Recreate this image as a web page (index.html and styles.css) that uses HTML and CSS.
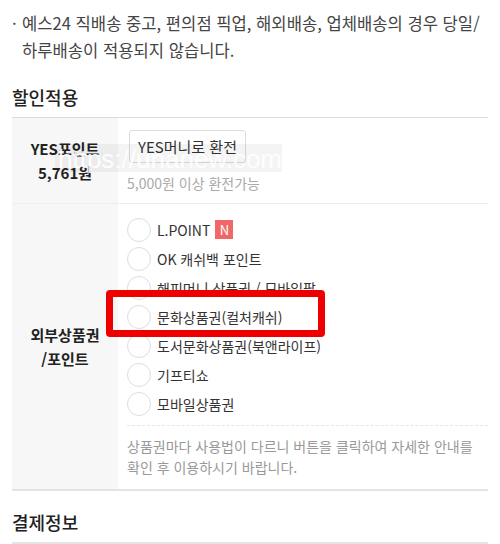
FILE: index.html
```html
<!DOCTYPE html>
<html lang="ko">
<head>
    <meta charset="UTF-8">
    <meta name="viewport" content="width=device-width, initial-scale=1.0">
    <title>할인적용</title>
    <link rel="stylesheet" href="styles.css">
</head>
<body>
    <div class="page">
        <p class="notice"><span class="dot">·</span>예스24 직배송 중고, 편의점 픽업, 해외배송, 업체배송의 경우 당일/<br>하루배송이 적용되지 않습니다.</p>

        <h2 class="section-title">할인적용</h2>
        <div class="table">
            <div class="row">
                <div class="label">YES포인트<br>5,761원</div>
                <div class="cell cell-point">
                    <button class="btn">YES머니로 환전</button>
                    <p class="hint">5,000원 이상 환전가능</p>
                </div>
            </div>
            <div class="row last">
                <div class="label">외부상품권<br>/포인트</div>
                <div class="cell">
                    <ul class="radio-list">
                        <li><span class="radio"></span>L.POINT <span class="badge">N</span></li>
                        <li><span class="radio"></span>OK 캐쉬백 포인트</li>
                        <li><span class="radio"></span>해피머니 상품권 / 모바일팝</li>
                        <li><span class="radio"></span>문화상품권(컬처캐쉬)</li>
                        <li><span class="radio"></span>도서문화상품권(북앤라이프)</li>
                        <li><span class="radio"></span>기프티쇼</li>
                        <li><span class="radio"></span>모바일상품권</li>
                    </ul>
                    <p class="note">상품권마다 사용법이 다르니 버튼을 클릭하여 자세한 안내를<br>확인 후 이용하시기 바랍니다.</p>
                </div>
            </div>
        </div>

        <h2 class="section-title pay">결제정보</h2>
        <div class="rule"></div>
    </div>

    <!-- 캡처 위에 얹힌 표시들 -->
    <div class="highlight"></div>
    <div class="watermark">https://unanew.com</div>
</body>
</html>
```

FILE: styles.css
```css
body {
    margin: 0;
    background: #fff;
    font-family: "Noto Sans CJK KR", "Noto Sans", sans-serif;
    color: #333;
    overflow: hidden;
}

.page {
    padding: 10px 12px 0;
}

.notice {
    margin: 0;
    padding-left: 10px;
    position: relative;
    font-size: 16.6px;
    line-height: 27px;
    color: #444;
}

.notice .dot {
    position: absolute;
    left: 0;
    top: 0;
}

.section-title {
    margin: 0;
    padding: 20px 0 7px;
    font-size: 18px;
    font-weight: 500;
    line-height: 26px;
    color: #222;
}

.section-title.pay {
    padding: 18px 0 7px;
}

.table {
    border-top: 1px solid #dcdcdc;
    border-bottom: 2px solid #e4e4e4;
}

.row {
    display: flex;
    border-bottom: 1px solid #eee;
}

.row.last {
    border-bottom: none;
}

.label {
    width: 106px;
    flex-shrink: 0;
    background: #f7f7f7;
    display: flex;
    align-items: center;
    justify-content: center;
    text-align: center;
    font-size: 15px;
    font-weight: 700;
    line-height: 24px;
    color: #222;
}

.cell {
    flex: 1;
    padding-left: 9px;
}

.cell-point {
    padding-top: 12px;
    padding-bottom: 10px;
}

.btn {
    display: block;
    font-family: inherit;
    font-size: 15px;
    color: #333;
    background: #fff;
    border: 1px solid #ddd;
    border-radius: 3px;
    height: 33px;
    padding: 0 8px;
    margin: 0 0 0 2px;
}

.hint {
    margin: 10px 0 0;
    font-size: 14px;
    line-height: 20px;
    color: #aaa;
}

.radio-list {
    list-style: none;
    margin: 0;
    padding: 11px 0 7px;
    border-bottom: 1px dashed #e6e6e6;
}

.radio-list li {
    display: flex;
    align-items: center;
    height: 29px;
    font-size: 14px;
    color: #333;
}

.radio {
    width: 22px;
    height: 22px;
    border: 1px solid #ddd;
    border-radius: 50%;
    margin-right: 6px;
    flex-shrink: 0;
}

.badge {
    display: inline-flex;
    align-items: center;
    justify-content: center;
    width: 18px;
    height: 19px;
    margin-left: 5px;
    background: #f06767;
    color: #fff;
    font-size: 13px;
}

.note {
    margin: 0;
    padding: 10px 0 11px;
    font-size: 14px;
    line-height: 21px;
    color: #999;
}

.rule {
    border-top: 2px solid #e4e4e4;
}

.highlight {
    position: absolute;
    left: 106px;
    top: 290px;
    width: 205px;
    height: 33px;
    border: 7px solid #ee0000;
    border-radius: 4px;
}

.watermark {
    position: absolute;
    left: 55px;
    top: 144px;
    width: 227px;
    height: 28px;
    padding-left: 3px;
    box-sizing: border-box;
    background: rgba(0, 0, 0, 0.045);
    color: rgba(255, 255, 255, 0.92);
    font-family: "Liberation Sans", Arial, sans-serif;
    font-size: 26px;
    line-height: 31px;
    white-space: nowrap;
}
```
